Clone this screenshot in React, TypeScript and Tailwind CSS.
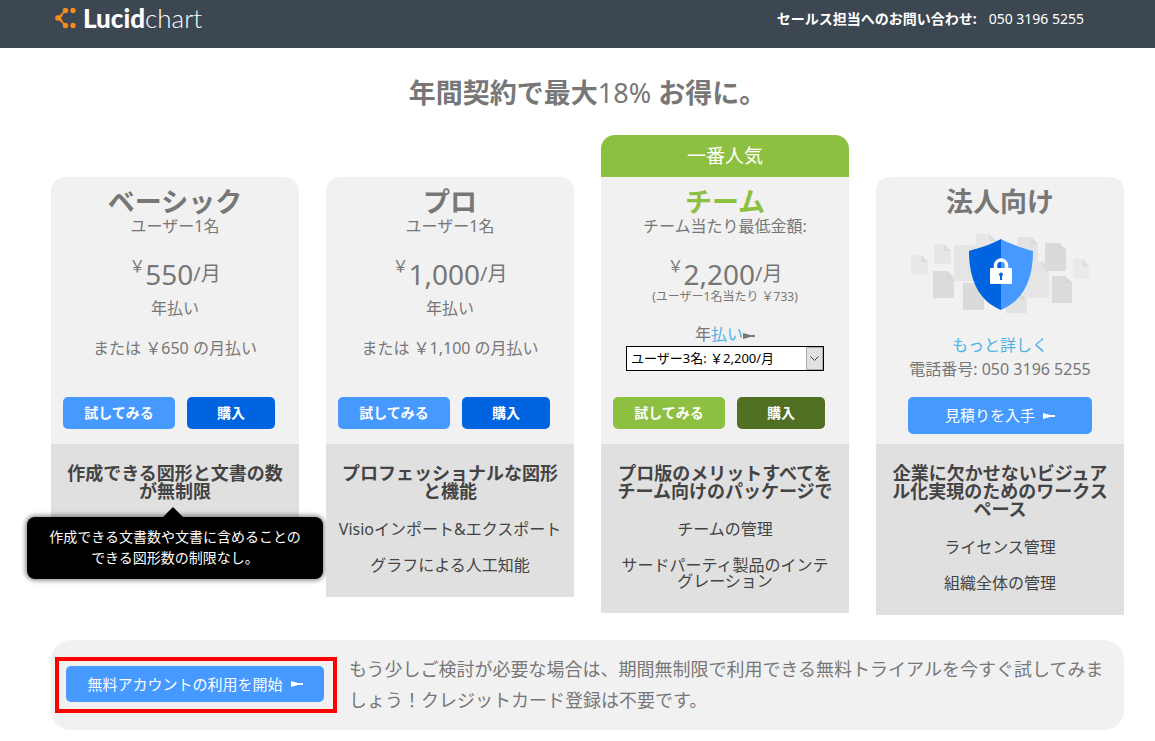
import React, { useState } from 'react'
import clsx from 'clsx'

type Plan = {
  name: string
  note: string
  price: string
  monthly?: string
  popular?: boolean
  headline: string
  features: string[]
  tip?: string
}

const plans: Plan[] = [
  {
    name: 'ベーシック',
    note: 'ユーザー1名',
    price: '550',
    monthly: 'または ￥650 の月払い',
    headline: '作成できる図形と文書の数\nが無制限',
    features: [],
    tip: '作成できる文書数や文書に含めることの\nできる図形数の制限なし。',
  },
  {
    name: 'プロ',
    note: 'ユーザー1名',
    price: '1,000',
    monthly: 'または ￥1,100 の月払い',
    headline: 'プロフェッショナルな図形\nと機能',
    features: ['Visioインポート&エクスポート', 'グラフによる人工知能'],
  },
  {
    name: 'チーム',
    note: 'チーム当たり最低金額:',
    price: '2,200',
    popular: true,
    headline: 'プロ版のメリットすべてを\nチーム向けのパッケージで',
    features: ['チームの管理', 'サードパーティ製品のインテ\nグレーション'],
  },
]

const Logo = () => (
  <a href="#" className="flex items-center gap-[6px] text-white" aria-label="Lucidchart">
    <svg width="22" height="22" viewBox="0 0 22 22" fill="#f68b1f">
      <path d="M3 11 10.5 3.5M3 11 10.5 18.5" stroke="#f68b1f" strokeWidth="1.6" />
      <path d="M2 11 8.5 7 6 11 8.5 15Z" />
      <circle cx="3" cy="11" r="2.8" />
      <circle cx="10.5" cy="3.5" r="2.7" />
      <circle cx="10.5" cy="18.5" r="2.7" />
      <circle cx="18" cy="3.5" r="2.7" />
      <circle cx="18" cy="18.5" r="2.7" />
    </svg>
    <span className="font-['Lato',sans-serif] text-[26px] leading-[28px] font-light">
      <span className="font-black">Lucid</span>chart
    </span>
  </a>
)

const Arrow = () => (
  <svg width="12" height="6" viewBox="0 0 12 6" fill="currentColor" className="inline-block align-middle">
    <path d="M0 0 7 2H12V4H7L0 6Z" />
  </svg>
)

// [x, y, width, height, color]
const sheets: [number, number, number, number, string][] = [
  [0, 22, 17, 20, '#e9e9e9'],
  [23, 11, 17, 20, '#e6e6e6'],
  [65, 1, 20, 24, '#e6e6e6'],
  [43, 12, 26, 36, '#e5e5e5'],
  [22, 38, 21, 27, '#dbdbdb'],
  [52, 50, 21, 27, '#dadada'],
  [106, 4, 21, 25, '#e3e3e3'],
  [112, 28, 26, 37, '#e5e5e5'],
  [95, 60, 21, 20, '#e2e2e2'],
  [134, 10, 21, 28, '#dadada'],
  [141, 43, 20, 27, '#dbdbdb'],
  [162, 26, 16, 20, '#eaeaea'],
]

const Shield = () => (
  <svg width="178" height="80" viewBox="0 0 178 80" className="mx-auto" aria-hidden="true">
    {sheets.map(([x, y, w, h, color]) => (
      <g key={`${x}-${y}`}>
        <path d={`M${x} ${y}h${w - 7}l7 7v${h - 7}h${-w}z`} fill={color} />
        <path d={`M${x + w - 7} ${y}l7 7h-7z`} fill="#d2d2d2" opacity="0.5" />
      </g>
    ))}
    <path d="M90 6C79 12 68 15 58 18C58 44 66 67 90 77Z" fill="#0064e0" />
    <path d="M90 6C101 12 112 15 122 18C122 44 114 67 90 77Z" fill="#4699ff" />
    <path d="M84.5 36V32.5a5.5 5.5 0 0 1 11 0V36" fill="none" stroke="#fff" strokeWidth="3.5" />
    <rect x="79" y="35" width="22" height="16" rx="1" fill="#fff" />
    <path d="M88 42a2 2 0 1 1 3 1.2V47h-2v-3.8Z" fill="#0064e0" />
  </svg>
)

const Price = ({ amount }: { amount: string }) => (
  <p className="mt-[21px] flex h-8 items-center justify-center">
    <span className="self-start text-[16px] leading-[16px]">￥</span>
    <span className="text-[28px] leading-[32px]">{amount}</span>
    <span className="text-[20px] leading-[32px]">/月</span>
  </p>
)

const Features = ({ headline, features }: { headline: string; features: string[] }) => (
  <div className="bg-[#e0e0e0] pt-5 pb-6 text-center text-[#444]">
    <h3 className="text-[18px] leading-[18px] font-bold whitespace-pre">{headline}</h3>
    {features.length > 0 && (
      <ul className="mt-[21px] flex flex-col gap-5 text-[16px] leading-[16px] whitespace-pre">
        {features.map((feature) => (
          <li key={feature}>{feature}</li>
        ))}
      </ul>
    )}
  </div>
)

const PlanCard = ({ plan }: { plan: Plan }) => {
  const [seats, setSeats] = useState('3')

  return (
    <section className={clsx('relative', !plan.popular && 'mt-[42px]')}>
      {plan.popular && (
        <p className="rounded-t-[14px] bg-[#8dc041] text-center text-[19px] leading-[42px] text-white">一番人気</p>
      )}
      <div className={clsx('flex min-h-[267px] flex-col bg-[#f1f1f1] pt-3 pb-[15px] text-center', !plan.popular && 'rounded-t-[14px]')}>
        <h2 className={clsx('text-[27px] leading-[26px] font-bold', plan.popular && 'text-[#8dc041]')}>{plan.name}</h2>
        <p className="text-[16px] leading-[22px]">{plan.note}</p>
        <Price amount={plan.price} />
        {plan.popular ? (
          <>
            <p className="text-[12px] leading-[14px]">(ユーザー1名当たり ￥733)</p>
            <p className="mt-[18px] text-[16px] leading-[24px]">
              年<a href="#" className="text-[#4db3e6]">払い</a>
              <Arrow />
            </p>
            <div className="relative mx-auto w-[198px]">
              <select
                aria-label="ユーザー数"
                value={seats}
                onChange={(e) => setSeats(e.target.value)}
                className="block h-[25px] w-full appearance-none border border-black bg-white pl-1 text-[13px] text-black"
              >
                <option value="3">ユーザー3名: ￥2,200/月</option>
              </select>
              <span className="pointer-events-none absolute inset-y-px right-px flex w-[17px] items-center justify-center border border-[#adadad] bg-[#e1e1e1]">
                <svg width="9" height="6" viewBox="0 0 9 6" fill="none" stroke="#444">
                  <path d="M0.5 0.5 4.5 4.5 8.5 0.5" />
                </svg>
              </span>
            </div>
          </>
        ) : (
          <>
            <p className="mt-[6px] text-[16px] leading-[24px]">年払い</p>
            <p className="mt-4 text-[16px] leading-[24px]">{plan.monthly}</p>
          </>
        )}
        <div className="mt-auto flex gap-3 px-3 text-[14px] leading-[32px] font-bold text-white">
          <button className={clsx('w-[112px] rounded-[5px]', plan.popular ? 'bg-[#8dc041]' : 'bg-[#4699ff]')}>試してみる</button>
          <button className={clsx('w-[88px] rounded-[5px]', plan.popular ? 'bg-[#527024]' : 'bg-[#0064e0]')}>購入</button>
        </div>
      </div>
      <Features headline={plan.headline} features={plan.features} />
      {plan.tip && (
        <div
          role="tooltip"
          className="absolute top-[340px] -left-6 w-[296px] rounded-[8px] bg-black pt-[9px] pb-[11px] text-center text-[14px] leading-[21px] whitespace-pre text-white shadow-[0_0_4px_2px_rgba(0,0,0,0.4)]"
        >
          <svg width="20" height="10" viewBox="0 0 20 10" className="absolute -top-[10px] left-[136px]">
            <path d="M0 10 10 0 20 10Z" />
          </svg>
          {plan.tip}
        </div>
      )}
    </section>
  )
}

const App: React.FC = () => {
  return (
    <div className="bg-white font-['Noto_Sans','Noto_Sans_CJK_JP',sans-serif] text-[#777]">
      <header className="flex h-12 items-start justify-between bg-[#3d4752] pt-1 pr-[71px] pl-[55px]">
        <Logo />
        <p className="text-[14px] leading-[30px] text-white">
          <b className="mr-3">セールス担当へのお問い合わせ:</b>050 3196 5255
        </p>
      </header>

      <main className="pr-[31px] pl-[51px]">
        <h1 className="pt-7 text-center text-[27px] leading-[34px] font-bold">
          年間契約で最大<span className="font-normal">18%</span> お得に。
        </h1>

        <div className="mt-[25px] grid grid-cols-4 items-start gap-[27px]">
          {plans.map((plan) => (
            <PlanCard key={plan.name} plan={plan} />
          ))}
          <section className="mt-[42px]">
            <div className="flex min-h-[267px] flex-col rounded-t-[14px] bg-[#f1f1f1] pt-3 pb-[10px] text-center">
              <h2 className="mb-[18px] text-[27px] leading-[26px] font-bold">法人向け</h2>
              <Shield />
              <a href="#" className="mt-5 text-[16px] leading-[24px] text-[#4db3e6]">もっと詳しく</a>
              <p className="text-[16px] leading-[24px]">電話番号: 050 3196 5255</p>
              <button className="mx-8 mt-auto flex items-center justify-center gap-2 rounded-[5px] bg-[#4699ff] text-[15px] leading-[37px] text-white">
                見積りを入手 <Arrow />
              </button>
            </div>
            <Features
              headline={'企業に欠かせないビジュア\nル化実現のためのワークス\nペース'}
              features={['ライセンス管理', '組織全体の管理']}
            />
          </section>
        </div>

        <section className="mt-[25px] flex items-center rounded-[20px] bg-[#f1f1f1] py-[14px] pr-4 pl-1">
          <div className="mr-3 shrink-0 border-4 border-[#f00] pt-[5px] pr-[9px] pb-[7px] pl-[7px]">
            <button className="flex w-[258px] items-center justify-center gap-2 rounded-[5px] bg-[#4699ff] text-[15px] leading-[36px] text-white">
              無料アカウントの利用を開始 <Arrow />
            </button>
          </div>
          <p className="text-[18px] leading-[31px]">
            もう少しご検討が必要な場合は、期間無制限で利用できる無料トライアルを今すぐ試してみましょう！クレジットカード登録は不要です。
          </p>
        </section>
      </main>
    </div>
  )
}

export default App
